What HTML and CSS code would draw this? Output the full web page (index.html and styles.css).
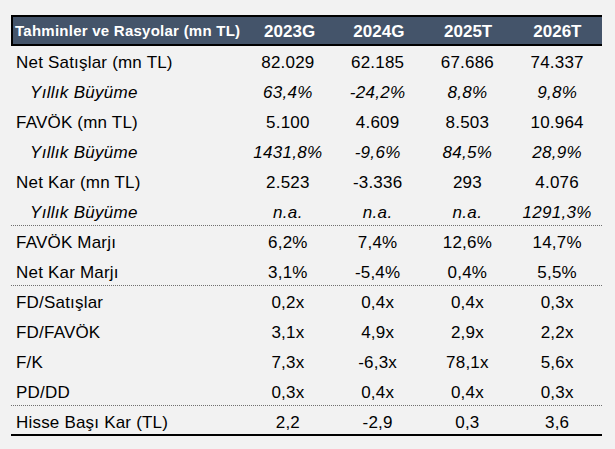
FILE: index.html
```html
<!DOCTYPE html>
<html lang="tr">
<head>
<meta charset="utf-8">
<title>Tahminler ve Rasyolar</title>
<link rel="stylesheet" href="styles.css">
</head>
<body>
<div class="tbl">
  <div class="row head">
    <div class="lbl">Tahminler ve Rasyolar (mn TL)</div>
    <div class="c">2023G</div>
    <div class="c">2024G</div>
    <div class="c">2025T</div>
    <div class="c">2026T</div>
  </div>
  <div class="row">
    <div class="lbl">Net Satışlar (mn TL)</div>
    <div class="c">82.029</div><div class="c">62.185</div><div class="c">67.686</div><div class="c">74.337</div>
  </div>
  <div class="row sub">
    <div class="lbl">Yıllık Büyüme</div>
    <div class="c">63,4%</div><div class="c">-24,2%</div><div class="c">8,8%</div><div class="c">9,8%</div>
  </div>
  <div class="row">
    <div class="lbl">FAVÖK (mn TL)</div>
    <div class="c">5.100</div><div class="c">4.609</div><div class="c">8.503</div><div class="c">10.964</div>
  </div>
  <div class="row sub">
    <div class="lbl">Yıllık Büyüme</div>
    <div class="c">1431,8%</div><div class="c">-9,6%</div><div class="c">84,5%</div><div class="c">28,9%</div>
  </div>
  <div class="row">
    <div class="lbl">Net Kar (mn TL)</div>
    <div class="c">2.523</div><div class="c">-3.336</div><div class="c">293</div><div class="c">4.076</div>
  </div>
  <div class="row sub sep">
    <div class="lbl">Yıllık Büyüme</div>
    <div class="c">n.a.</div><div class="c">n.a.</div><div class="c">n.a.</div><div class="c">1291,3%</div>
  </div>
  <div class="row">
    <div class="lbl">FAVÖK Marjı</div>
    <div class="c">6,2%</div><div class="c">7,4%</div><div class="c">12,6%</div><div class="c">14,7%</div>
  </div>
  <div class="row sep">
    <div class="lbl">Net Kar Marjı</div>
    <div class="c">3,1%</div><div class="c">-5,4%</div><div class="c">0,4%</div><div class="c">5,5%</div>
  </div>
  <div class="row">
    <div class="lbl">FD/Satışlar</div>
    <div class="c">0,2x</div><div class="c">0,4x</div><div class="c">0,4x</div><div class="c">0,3x</div>
  </div>
  <div class="row">
    <div class="lbl">FD/FAVÖK</div>
    <div class="c">3,1x</div><div class="c">4,9x</div><div class="c">2,9x</div><div class="c">2,2x</div>
  </div>
  <div class="row">
    <div class="lbl">F/K</div>
    <div class="c">7,3x</div><div class="c">-6,3x</div><div class="c">78,1x</div><div class="c">5,6x</div>
  </div>
  <div class="row sep">
    <div class="lbl">PD/DD</div>
    <div class="c">0,3x</div><div class="c">0,4x</div><div class="c">0,4x</div><div class="c">0,3x</div>
  </div>
  <div class="row last">
    <div class="lbl">Hisse Başı Kar (TL)</div>
    <div class="c">2,2</div><div class="c">-2,9</div><div class="c">0,3</div><div class="c">3,6</div>
  </div>
</div>
</body>
</html>
```

FILE: styles.css
```css
html, body {
  margin: 0;
  padding: 0;
  background: #f2f2f2;
}

body {
  font-family: "Liberation Sans", Arial, sans-serif;
  color: #000;
}

.tbl {
  width: 591px;
  margin: 15px 0 0 11px;
}

.row {
  display: grid;
  grid-template-columns: 232px repeat(4, 1fr);
  height: 30px;
  box-sizing: border-box;
  padding-top: 4px;
  font-size: 17px;
  line-height: 26px;
  letter-spacing: 0.2px;
}

.row .lbl {
  padding-left: 5px;
  white-space: nowrap;
}

.row .c {
  text-align: center;
  white-space: nowrap;
}

.sub {
  font-style: italic;
  letter-spacing: 0.3px;
}

.sub .lbl {
  padding-left: 19px;
}

.sep {
  border-bottom: 1px dotted #6f6f6f;
}

.last {
  border-bottom: 2px solid #000;
}

.head {
  height: 31px;
  padding-top: 0;
  background: #44546a;
  color: #fff;
  font-weight: bold;
  border-top: 2px solid #000;
  border-left: 2px solid #000;
  border-bottom: 2px solid #000;
  line-height: 27px;
  letter-spacing: 0;
}

.head .lbl {
  padding-left: 2px;
  font-size: 15px;
  letter-spacing: 0.25px;
}

.head .c {
  padding-top: 1px;
  font-size: 17px;
}
```
